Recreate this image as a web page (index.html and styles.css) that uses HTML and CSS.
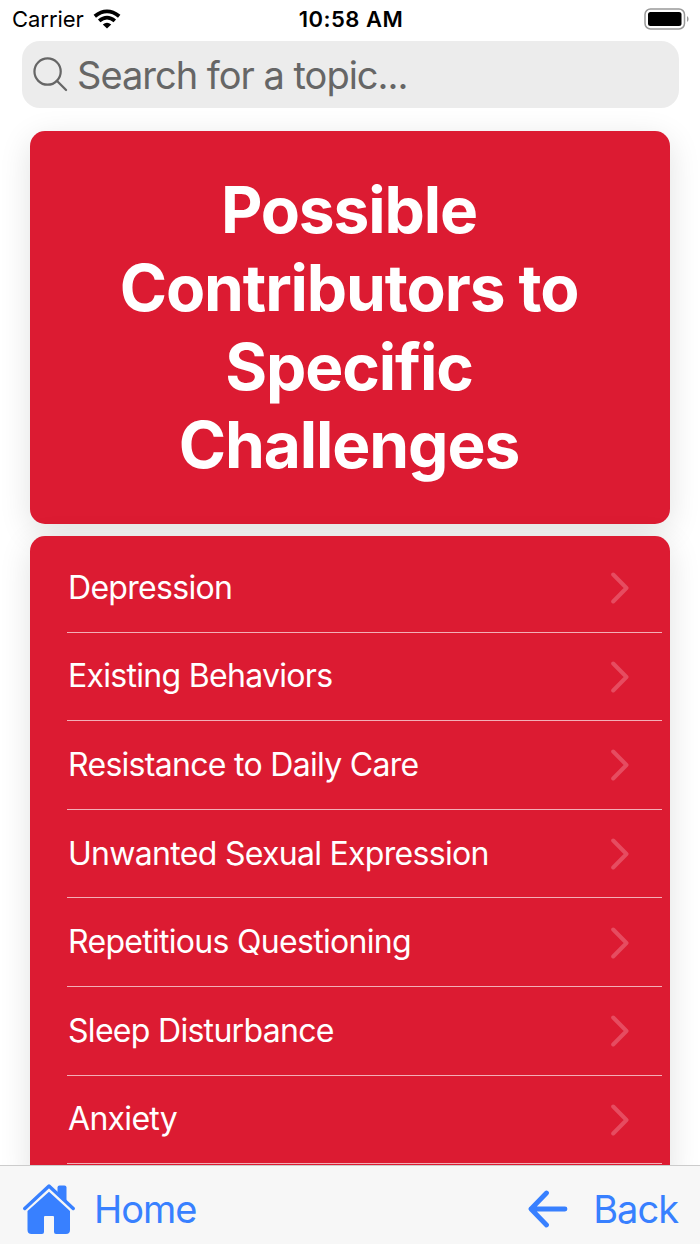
FILE: index.html
```html
<!DOCTYPE html>
<html lang="en">
  <head>
    <meta charset="UTF-8" />
    <meta name="viewport" content="width=device-width, initial-scale=1.0" />
    <title>Possible Contributors to Specific Challenges</title>
    <link rel="stylesheet" href="styles.css" />
  </head>
  <body>
    <header class="status">
      <div class="carrier">
        <span>Carrier</span>
        <svg class="wifi" viewBox="0 0 28 20">
          <path d="M1.8 7.3 Q14 -2.6 26.2 7.3" />
          <path d="M6.2 11.9 Q14 5.4 21.8 11.9" />
          <path class="dot" d="M9.8 15.4 Q14 12 18.2 15.4 L14 19.6 Z" />
        </svg>
      </div>
      <div class="time">10:58 AM</div>
      <svg class="battery" viewBox="0 0 46 22">
        <rect class="shell" x="1" y="1" width="39.5" height="20" rx="5.5" />
        <rect x="4" y="4" width="33.5" height="14" rx="2.5" />
        <path class="cap" d="M43 8 Q44.6 9 44.6 11 Q44.6 13 43 14 Z" />
      </svg>
    </header>
    <label class="search">
      <svg class="magnifier" viewBox="0 0 36 36">
        <circle cx="15" cy="15" r="13.5" />
        <path d="M24.5 24.5 L34 34" />
      </svg>
      <input type="text" placeholder="Search for a topic..." />
    </label>
    <main class="content">
      <section class="card title-card">
        <h1>
          <span>Possible</span>
          <span>Contributors to</span>
          <span>Specific</span>
          <span>Challenges</span>
        </h1>
      </section>
      <ul class="card list">
        <li><span>Depression</span><svg class="chevron" viewBox="0 0 20 32"><path d="M3.2 2.5 L16.5 16 L3.2 29.5" /></svg></li>
        <li><span>Existing Behaviors</span><svg class="chevron" viewBox="0 0 20 32"><path d="M3.2 2.5 L16.5 16 L3.2 29.5" /></svg></li>
        <li><span>Resistance to Daily Care</span><svg class="chevron" viewBox="0 0 20 32"><path d="M3.2 2.5 L16.5 16 L3.2 29.5" /></svg></li>
        <li><span>Unwanted Sexual Expression</span><svg class="chevron" viewBox="0 0 20 32"><path d="M3.2 2.5 L16.5 16 L3.2 29.5" /></svg></li>
        <li><span>Repetitious Questioning</span><svg class="chevron" viewBox="0 0 20 32"><path d="M3.2 2.5 L16.5 16 L3.2 29.5" /></svg></li>
        <li><span>Sleep Disturbance</span><svg class="chevron" viewBox="0 0 20 32"><path d="M3.2 2.5 L16.5 16 L3.2 29.5" /></svg></li>
        <li><span>Anxiety</span><svg class="chevron" viewBox="0 0 20 32"><path d="M3.2 2.5 L16.5 16 L3.2 29.5" /></svg></li>
      </ul>
    </main>
    <nav class="toolbar">
      <a class="home" href="#">
        <svg viewBox="0 0 54 50">
          <path class="roof" d="M2.8 24.5 L27 2 L51.2 24.5" />
          <path d="M35.5 9 V3.5 Q35.5 1.5 37.5 1.5 H42.5 Q44.5 1.5 44.5 3.5 V18 Z" />
          <path d="M27 7.8 L48 27 V46 Q48 50 44 50 H34 Q32 50 32 48 V33 Q32 32 31 32 H23 Q22 32 22 33 V48 Q22 50 20 50 H9.5 Q5.5 50 5.5 46 V27 Z" />
        </svg>
        <span>Home</span>
      </a>
      <a class="back" href="#">
        <svg viewBox="0 0 40 38">
          <path d="M37 19 H3 M18.5 3 L3 19 L18.5 35" />
        </svg>
        <span>Back</span>
      </a>
    </nav>
  </body>
</html>
```
FILE: styles.css
```css
* {
  box-sizing: border-box;
}
body {
  margin: 0;
  height: 1244px;
  display: flex;
  flex-direction: column;
  overflow: hidden;
  background-color: #fff;
  font-family: Inter, "Liberation Sans", sans-serif;
}
.status {
  height: 41px;
  flex: none;
  display: grid;
  grid-template-columns: 1fr auto 1fr;
  align-items: center;
  padding: 0 10px 3px 12px;
  font-size: 22px;
}
.carrier {
  display: flex;
  align-items: center;
  gap: 9px;
  letter-spacing: -0.05px;
}
.wifi {
  width: 28px;
  height: 20px;
  fill: none;
  stroke: #000;
  stroke-width: 3.8;
}
.wifi .dot {
  fill: #000;
  stroke: none;
}
.time {
  font-weight: 600;
  letter-spacing: 0.5px;
}
.battery {
  width: 46px;
  height: 22px;
  justify-self: end;
}
.battery .shell {
  fill: none;
  stroke: #999;
  stroke-width: 1.5;
}
.battery .cap {
  fill: #999;
}
.search {
  flex: none;
  height: 67px;
  margin: 0 21px 0 22px;
  padding: 0 11px;
  display: flex;
  align-items: center;
  gap: 9px;
  border-radius: 18px;
  background-color: #ececec;
}
.magnifier {
  width: 35px;
  height: 35px;
  fill: none;
  stroke: #666;
  stroke-width: 2.3;
  stroke-linecap: round;
}
.search input {
  flex: 1;
  min-width: 0;
  padding: 0;
  border: none;
  outline: none;
  background: none;
  font: inherit;
  font-size: 38px;
  letter-spacing: -1px;
}
.search input::placeholder {
  color: #666;
  opacity: 1;
}
.content {
  flex: 1;
  min-height: 0;
  padding: 23px 30px 0;
  overflow: hidden;
}
.card {
  background-color: #dc1b32;
  color: #fff;
  border-radius: 15px;
  box-shadow: 0 8px 32px rgba(0, 0, 0, 0.12);
}
.title-card {
  height: 393px;
  padding: 40px 2px 0 0;
}
h1 {
  margin: 0;
  font-size: 64px;
  line-height: 78.4px;
  font-weight: 700;
  letter-spacing: -1.1px;
  text-align: center;
}
h1 span {
  display: block;
}
.list {
  margin: 12px 0 0;
  padding: 8px 8px 20px 37px;
  list-style: none;
}
.list li {
  height: 88.6px;
  display: flex;
  align-items: center;
  justify-content: space-between;
  padding-right: 32px;
  border-bottom: 1px solid rgba(255, 255, 255, 0.65);
  font-size: 32px;
  letter-spacing: -0.7px;
}
.list span {
  padding: 0 0 1px 1px;
}
.chevron {
  width: 20px;
  height: 32px;
  margin-top: 1px;
  fill: none;
  stroke: #e64c60;
  stroke-width: 4;
  stroke-linecap: round;
  stroke-linejoin: round;
}
.toolbar {
  flex: none;
  height: 79px;
  display: flex;
  justify-content: space-between;
  align-items: center;
  padding: 7px 22px 0 22px;
  border-top: 1px solid #ccc;
  background-color: #f7f7f7;
  font-size: 38px;
  letter-spacing: -1px;
}
.toolbar a {
  display: flex;
  align-items: center;
  color: #3880ff;
  text-decoration: none;
}
.home {
  gap: 18px;
}
.home svg {
  width: 54px;
  height: 50px;
  fill: #3880ff;
}
.home .roof {
  fill: none;
  stroke: #3880ff;
  stroke-width: 3.4;
  stroke-linecap: round;
  stroke-linejoin: round;
}
.back {
  gap: 25px;
}
.back svg {
  width: 40px;
  height: 38px;
  fill: none;
  stroke: #3880ff;
  stroke-width: 4.8;
  stroke-linecap: round;
  stroke-linejoin: round;
}
```
